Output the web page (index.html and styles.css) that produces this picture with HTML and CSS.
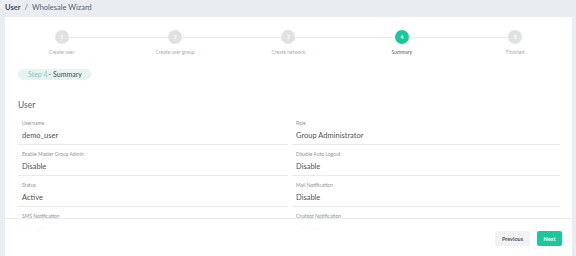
FILE: index.html
```html
<!DOCTYPE html>
<html>
<head>
<meta charset="utf-8">
<link rel="stylesheet" href="styles.css">
</head>
<body>
<div class="crumbs"><span class="crumb-root">User</span><span class="crumb-sep">/</span><span class="crumb-cur">Wholesale Wizard</span></div>
<div class="card">
  <div class="stepper">
    <div class="step"><div class="dot">1</div><div class="slabel">Create user</div></div>
    <div class="step"><div class="dot">2</div><div class="slabel">Create user group</div></div>
    <div class="step"><div class="dot">3</div><div class="slabel">Create network</div></div>
    <div class="step active"><div class="dot">4</div><div class="slabel">Summary</div></div>
    <div class="step last"><div class="dot">5</div><div class="slabel">Finished</div></div>
  </div>
  <div class="body">
    <div class="pill"><span class="pill-step">Step 4</span>- Summary</div>
    <div class="section">User</div>
    <div class="grid">
      <div class="field"><div class="flabel">Username</div><div class="fval">demo_user</div></div>
      <div class="field"><div class="flabel">Role</div><div class="fval">Group Administrator</div></div>
      <div class="field"><div class="flabel">Enable Master Group Admin</div><div class="fval">Disable</div></div>
      <div class="field"><div class="flabel">Disable Auto Logout</div><div class="fval">Disable</div></div>
      <div class="field"><div class="flabel">Status</div><div class="fval">Active</div></div>
      <div class="field"><div class="flabel">Mail Notification</div><div class="fval">Disable</div></div>
      <div class="field"><div class="flabel">SMS Notification</div><div class="fval">Disable</div></div>
      <div class="field"><div class="flabel">Chatbot Notification</div><div class="fval">Disable</div></div>
    </div>
  </div>
  <div class="footer">
    <button class="btn btn-prev">Previous</button>
    <button class="btn btn-next">Next</button>
  </div>
</div>
</body>
</html>
```
FILE: styles.css
```css
* { box-sizing: border-box; }
html, body { margin: 0; padding: 0; }
body {
  width: 576px;
  height: 256px;
  overflow: hidden;
  background: #e9edf2;
  font-family: Lato, "Open Sans", sans-serif;
  color: #444;
}
.crumbs {
  height: 17px;
  padding-left: 5px;
  font-size: 7.5px;
  line-height: 15px;
  color: #56616f;
}
.crumb-root { font-weight: 700; color: #3e4a5a; }
.crumb-sep { margin: 0 4px; }
.card {
  position: relative;
  margin: 0 4px 0 5px;
  height: 239px;
  background: #fff;
  overflow: hidden;
}
.stepper {
  display: grid;
  grid-template-columns: repeat(5, 1fr);
  padding-top: 13px;
}
.step {
  position: relative;
  display: flex;
  flex-direction: column;
  align-items: center;
}
.step::after {
  content: "";
  position: absolute;
  top: 7px;
  left: 50%;
  width: 100%;
  height: 1px;
  background: #e6e8ea;
  z-index: 0;
}
.step.last::after { display: none; }
.dot {
  position: relative;
  z-index: 1;
  width: 14px;
  height: 14px;
  border-radius: 50%;
  background: #dfe1e3;
  color: #fff;
  font-size: 5px;
  font-weight: 700;
  line-height: 14px;
  text-align: center;
}
.slabel {
  margin-top: 5px;
  font-size: 5px;
  line-height: 6px;
  color: #a8abaf;
}
.active .dot { background: #1ec69c; }
.active .slabel { color: #5a5a5a; }
.body {
  padding: 0 12px 0 13px;
}
.pill {
  display: inline-block;
  margin-top: 14px;
  height: 11px;
  padding: 0 9px 0 10px;
  border-radius: 6px;
  background: #e5f4f1;
  font-size: 7px;
  line-height: 11px;
  color: #4a4a4a;
}
.pill-step { color: #86c9b9; margin-right: 1px; }
.section {
  margin-top: 19px;
  font-size: 8.5px;
  line-height: 12px;
  color: #5c5c5c;
}
.grid {
  margin-top: 8px;
  display: grid;
  grid-template-columns: 270px 268px;
  column-gap: 4px;
  row-gap: 5px;
}
.field {
  padding: 0 3px 2px 4px;
  border-bottom: 1px solid #e8eaec;
}
.flabel {
  font-size: 5px;
  line-height: 8px;
  color: #8e9399;
}
.fval {
  margin-top: 3px;
  font-size: 7.5px;
  line-height: 12px;
  color: #505050;
}
.footer {
  position: absolute;
  left: 0;
  right: 0;
  bottom: 0;
  height: 38px;
  border-top: 1px solid #e8eaec;
  background: rgba(255, 255, 255, 0.97);
  display: flex;
  justify-content: flex-end;
  align-items: flex-start;
  gap: 7px;
  padding: 12px 10px 0 0;
}
.btn {
  height: 15px;
  border: none;
  border-radius: 2px;
  font-family: Lato, "Open Sans", sans-serif;
  font-size: 5.5px;
  font-weight: 700;
  padding: 0;
}
.btn-prev { width: 35px; background: #eff1f3; color: #555; }
.btn-next { width: 25px; background: #1ec69c; color: #fff; }
```
